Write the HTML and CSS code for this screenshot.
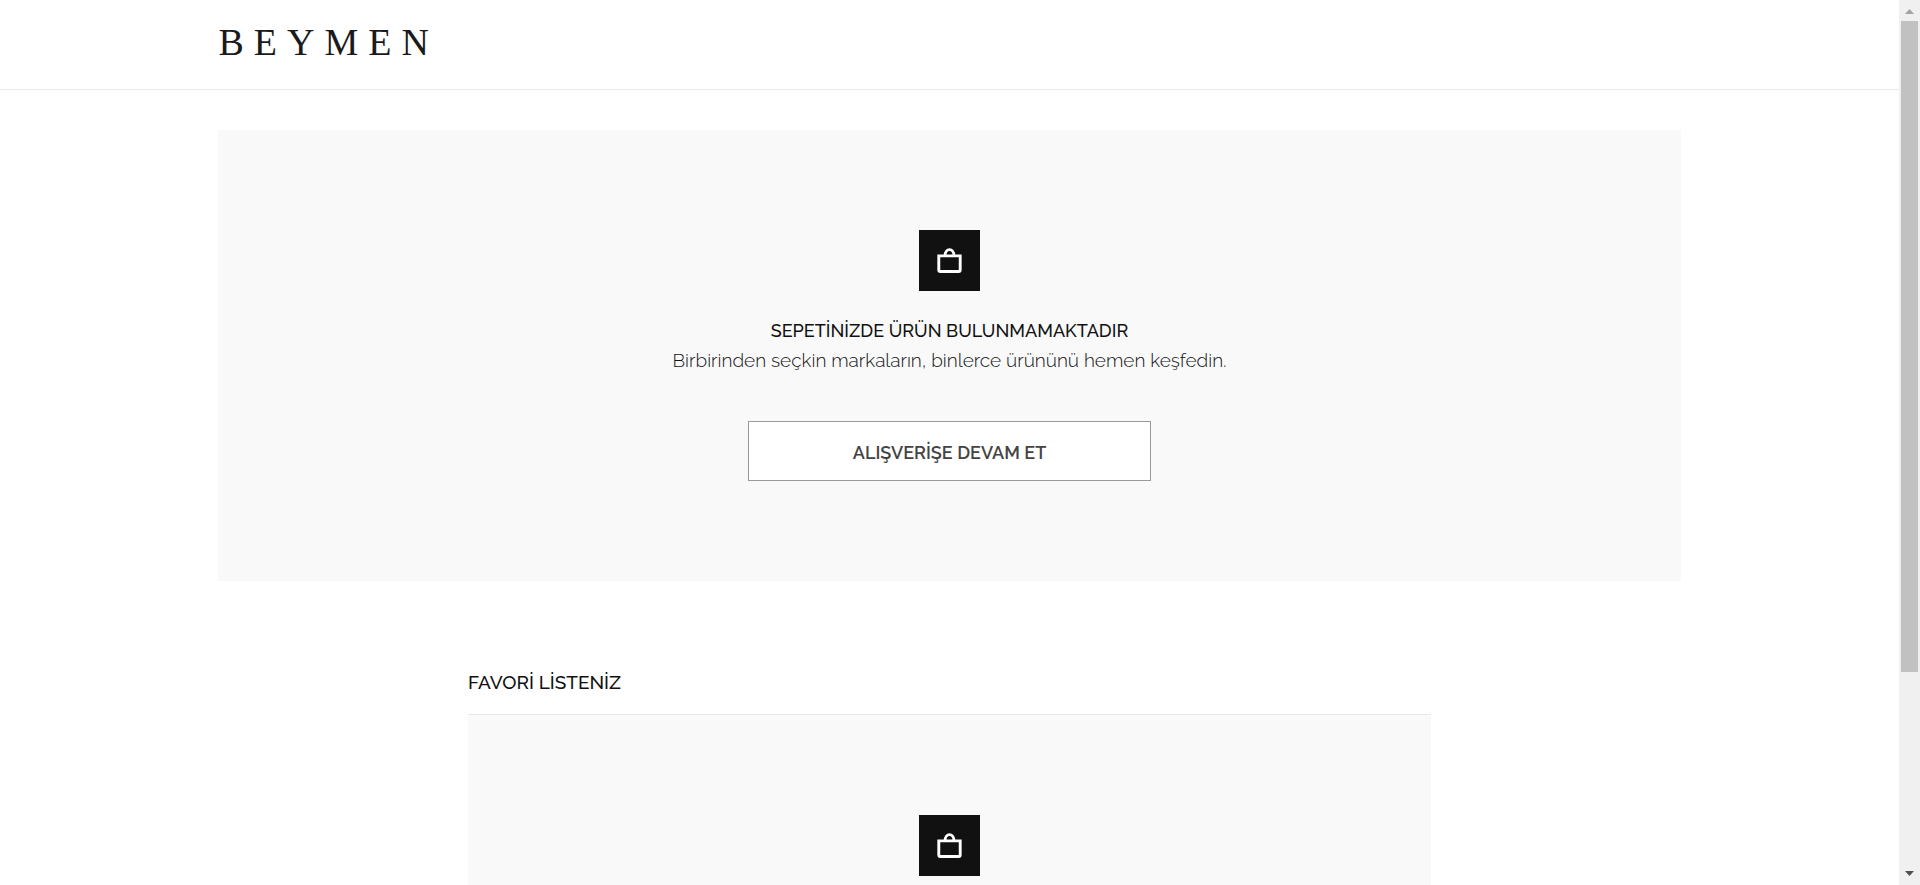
FILE: index.html
```html
<!DOCTYPE html>
<html lang="tr">
<head>
<meta charset="utf-8">
<meta name="viewport" content="width=device-width, initial-scale=1">
<title>Beymen - Sepetim</title>
<link rel="stylesheet" href="styles.css">
</head>
<body>
<div class="page">
  <header class="header">
    <div class="container"><a class="logo" href="#">BEYMEN</a></div>
  </header>
  <main>
    <section class="container empty-cart">
      <span class="bag">
        <svg width="27" height="27" viewBox="0 0 27 27" fill="none" stroke="#fff" aria-hidden="true">
          <path d="M2.8 8.9H24.2V23Q24.2 24.5 22.7 24.5H4.3Q2.8 24.5 2.8 23Z" stroke-width="2.9"/>
          <path d="M9.1 8.5C9.1 0.6 17.9 0.6 17.9 8.5" stroke-width="2.8"/>
        </svg>
      </span>
      <h1 class="title">SEPETİNİZDE ÜRÜN BULUNMAMAKTADIR</h1>
      <p class="text">Birbirinden seçkin markaların, binlerce ürününü hemen keşfedin.</p>
      <button class="continue" type="button">ALIŞVERİŞE DEVAM ET</button>
    </section>
    <section class="favorites">
      <h2 class="favorites-title">FAVORİ LİSTENİZ</h2>
      <div class="favorites-box">
        <span class="bag">
          <svg width="27" height="27" viewBox="0 0 27 27" fill="none" stroke="#fff" aria-hidden="true">
            <path d="M2.8 8.9H24.2V23Q24.2 24.5 22.7 24.5H4.3Q2.8 24.5 2.8 23Z" stroke-width="2.9"/>
            <path d="M9.1 8.5C9.1 0.6 17.9 0.6 17.9 8.5" stroke-width="2.8"/>
          </svg>
        </span>
      </div>
    </section>
  </main>
</div>
<div class="scrollbar" aria-hidden="true">
  <svg class="arrow" width="9" height="5" viewBox="0 0 9 5"><path d="M4.5 0L9 5H0Z" fill="#a3a3a3"/></svg>
  <div class="track"><div class="thumb"></div></div>
  <svg class="arrow" width="9" height="5" viewBox="0 0 9 5"><path d="M0 0H9L4.5 5Z" fill="#505050"/></svg>
</div>
</body>
</html>
```
FILE: styles.css
```css
* {
  box-sizing: border-box;
}

body {
  display: flex;
  height: 100vh;
  margin: 0;
  overflow: hidden;
  background: #fff;
  color: #111;
  font-family: Raleway, "Open Sans", sans-serif;
  font-size: 19px;
  line-height: 30px;
}

.page {
  flex: 1;
  overflow: hidden;
}

.container {
  width: 77%;
  margin: 0 auto;
}

.header {
  height: 90px;
  padding-top: 22px;
  border-bottom: 1px solid #e9e9e9;
}

.logo {
  color: #1a1a1a;
  font-family: "Liberation Serif", serif;
  font-size: 38px;
  line-height: 40px;
  letter-spacing: 10px;
  text-decoration: none;
}

.empty-cart {
  display: flex;
  flex-direction: column;
  align-items: center;
  margin-top: 40px;
  padding: 100px 20px;
  background: #f9f9f9;
}

.bag {
  display: flex;
  align-items: center;
  justify-content: center;
  width: 61px;
  height: 61px;
  background: #111;
}

.title {
  margin: 25px 0 0;
  font-size: 18px;
  font-weight: 500;
}

.text {
  margin: 0;
  font-weight: 300;
  line-height: 28px;
}

.continue {
  width: 403px;
  max-width: 100%;
  height: 60px;
  margin-top: 47px;
  padding: 4px 0 0;
  border: 1px solid #999;
  background: #fff;
  color: #444;
  font: inherit;
  font-size: 18px;
  font-weight: 600;
}

.favorites {
  width: 963px;
  max-width: 100%;
  margin: 86px auto 0;
}

.favorites-title {
  margin: 0;
  font-size: 19px;
  font-weight: 500;
}

.favorites-box {
  display: flex;
  justify-content: center;
  margin-top: 17px;
  padding: 100px 20px;
  border-top: 1px solid #e9e9e9;
  background: #f9f9f9;
}

.scrollbar {
  display: flex;
  flex-direction: column;
  align-items: center;
  justify-content: space-between;
  width: 21px;
  padding: 9px 2px;
  background: #f0f0f0;
}

.track {
  flex: 1;
  align-self: stretch;
  margin: 7px 0;
}

.thumb {
  height: 77.2%;
  background: #c1c1c1;
}
```
